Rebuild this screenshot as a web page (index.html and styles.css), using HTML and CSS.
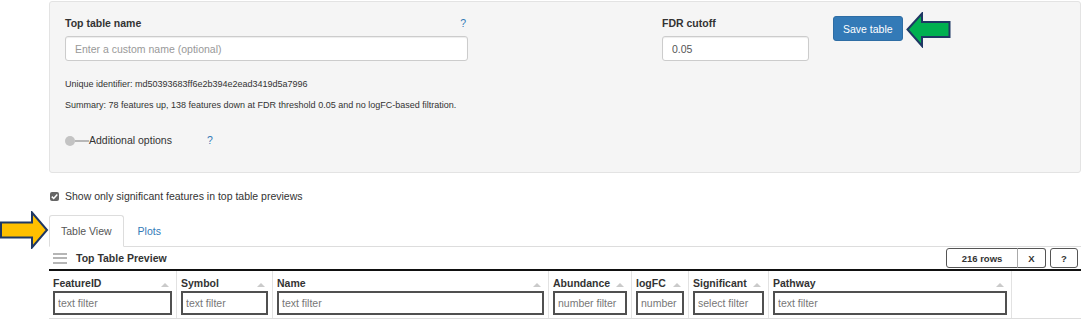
FILE: index.html
```html
<!DOCTYPE html>
<html lang="en">
<head>
    <meta charset="UTF-8">
    <meta name="viewport" content="width=device-width, initial-scale=1.0">
    <title>Top Table</title>
    <link rel="stylesheet" href="styles.css">
</head>
<body>
<div class="page">
    <div class="well">
        <div class="name-col">
            <div class="label-row">
                <label for="tableName">Top table name</label>
                <span class="help">?</span>
            </div>
            <input id="tableName" class="form-input" type="text" placeholder="Enter a custom name (optional)">
            <p class="note id-note">Unique identifier: md50393683ff6e2b394e2ead3419d5a7996</p>
            <p class="note summary">Summary: 78 features up, 138 features down at FDR threshold 0.05 and no logFC-based filtration.</p>
            <div class="switch-row">
                <span class="switch"></span>
                <span>Additional options</span>
                <span class="help">?</span>
            </div>
        </div>
        <div class="fdr-col">
            <label for="fdr">FDR cutoff</label>
            <input id="fdr" class="form-input value" type="text" value="0.05">
        </div>
        <div class="save-col">
            <button class="btn-save">Save table</button>
            <svg class="arrow-green" width="45" height="36" viewBox="0 0 45 36">
                <polygon points="1.5,17.5 16,1.5 16,10 43.5,10 43.5,25 16,25 16,34" fill="#00b050" stroke="#1f3864" stroke-width="2" stroke-linejoin="miter"/>
            </svg>
        </div>
    </div>

    <label class="check-row">
        <span class="check-box">
            <svg width="9" height="9" viewBox="0 0 9 9"><polyline points="1.8,4.6 3.7,6.5 7.3,2.4" fill="none" stroke="#fff" stroke-width="1.5"/></svg>
        </span>
        Show only significant features in top table previews
    </label>

    <div class="tabs">
        <svg class="arrow-yellow" width="49" height="38" viewBox="0 0 49 38">
            <polygon points="1,11.5 32,11.5 32,1.5 47,19 32,36.5 32,26.5 1,26.5" fill="#ffc000" stroke="#1f3864" stroke-width="2"/>
        </svg>
        <a class="tab active" href="#">Table View</a>
        <a class="tab" href="#">Plots</a>
    </div>

    <div class="toolbar">
        <span class="menu-icon"><i></i><i></i><i></i></span>
        <span class="toolbar-title">Top Table Preview</span>
        <div class="toolbar-btns">
            <div class="btn-group">
                <button class="tbtn rows-btn">216 rows</button>
                <button class="tbtn x-btn">X</button>
            </div>
            <button class="tbtn help-btn">?</button>
        </div>
    </div>

    <div class="grid-head">
        <div class="hcell">
            <div class="hlabel">FeatureID<span class="sort"></span></div>
            <input class="filter" type="text" placeholder="text filter">
        </div>
        <div class="hcell">
            <div class="hlabel">Symbol<span class="sort"></span></div>
            <input class="filter" type="text" placeholder="text filter">
        </div>
        <div class="hcell">
            <div class="hlabel">Name<span class="sort"></span></div>
            <input class="filter" type="text" placeholder="text filter">
        </div>
        <div class="hcell">
            <div class="hlabel">Abundance<span class="sort"></span></div>
            <input class="filter" type="text" placeholder="number filter">
        </div>
        <div class="hcell">
            <div class="hlabel">logFC<span class="sort"></span></div>
            <input class="filter" type="text" placeholder="number filter">
        </div>
        <div class="hcell">
            <div class="hlabel">Significant<span class="sort"></span></div>
            <input class="filter" type="text" placeholder="select filter">
        </div>
        <div class="hcell">
            <div class="hlabel">Pathway<span class="sort"></span></div>
            <input class="filter" type="text" placeholder="text filter">
        </div>
    </div>
</div>
</body>
</html>
```

FILE: styles.css
```css
body {
    margin: 0;
    font-family: "Liberation Sans", Arial, sans-serif;
    font-size: 10.5px;
    line-height: 15px;
    color: #333;
    background: #fff;
}
.page {
    padding: 0 5px 0 49px;
}
.well {
    display: flex;
    align-items: flex-start;
    margin-top: 1px;
    padding: 14px 15px 24px 15px;
    background: #f5f5f5;
    border: 1px solid #e3e3e3;
    border-radius: 3px;
}
.name-col {
    width: 403px;
}
.fdr-col {
    width: 147px;
    margin-left: 194px;
}
.save-col {
    display: flex;
    align-items: flex-start;
    margin-left: 24px;
}
label {
    display: block;
    font-weight: bold;
    margin-bottom: 5px;
}
.label-row {
    display: flex;
    justify-content: space-between;
    padding-right: 2px;
}
.help {
    color: #337ab7;
}
.form-input {
    display: block;
    box-sizing: border-box;
    width: 100%;
    height: 25px;
    padding: 0 9px;
    font-family: inherit;
    font-size: 10.5px;
    color: #555;
    background: #fff;
    border: 1px solid #ccc;
    border-radius: 3px;
    box-shadow: inset 0 1px 1px rgba(0, 0, 0, 0.075);
}
.form-input::placeholder {
    color: #999;
}
.note {
    margin: 0;
    font-size: 9px;
    line-height: 14px;
}
.id-note {
    margin-top: 16px;
}
.summary {
    margin-top: 7px;
}
.switch-row {
    display: flex;
    align-items: center;
    margin-top: 21px;
}
.switch-row .help {
    margin-left: 35px;
}
.switch {
    display: inline-flex;
    align-items: center;
}
.switch::before {
    content: "";
    width: 10px;
    height: 10px;
    border-radius: 50%;
    background: #c3c3c3;
}
.switch::after {
    content: "";
    width: 14px;
    height: 2px;
    background: #b8b8b8;
}
.btn-save {
    height: 25px;
    padding: 0 9px;
    font-family: inherit;
    font-size: 10.5px;
    color: #fff;
    background: #337ab7;
    border: 1px solid #2e6da4;
    border-radius: 3px;
}
.arrow-green {
    display: block;
    margin-left: 3px;
    margin-top: -4px;
}
.check-row {
    display: flex;
    align-items: center;
    margin: 16px 0 0 1px;
    font-weight: normal;
}
.check-box {
    display: flex;
    width: 9px;
    height: 9px;
    margin-right: 6px;
    background: #666;
    border-radius: 2px;
}
.tabs {
    position: relative;
    display: flex;
    margin-top: 11px;
    border-bottom: 1px solid #ddd;
}
.arrow-yellow {
    position: absolute;
    left: -49px;
    top: -4px;
}
.tab {
    padding: 8px 11px 7px;
    margin: 0 2px -1px 0;
    color: #337ab7;
    text-decoration: none;
    border: 1px solid transparent;
    border-radius: 3px 3px 0 0;
}
.tab.active {
    color: #555;
    background: #fff;
    border-color: #ddd #ddd transparent;
}
.toolbar {
    display: flex;
    align-items: center;
    height: 22px;
    padding-left: 4px;
}
.menu-icon {
    display: flex;
    flex-direction: column;
    gap: 2.5px;
    width: 14px;
}
.menu-icon i {
    height: 2px;
    background: #b5b5b5;
}
.toolbar-title {
    margin-left: 9px;
    font-weight: bold;
}
.toolbar-btns {
    display: flex;
    gap: 4px;
    margin-left: auto;
    margin-right: 3px;
}
.btn-group {
    display: flex;
}
.tbtn {
    height: 20px;
    padding: 0;
    font-family: inherit;
    font-size: 9.5px;
    font-weight: bold;
    color: #333;
    background: #fff;
    border: 1px solid #555;
    border-radius: 3px;
}
.rows-btn {
    width: 72px;
    border-radius: 3px 0 0 3px;
}
.x-btn {
    width: 29px;
    border-left-color: #aaa;
    border-radius: 0 3px 3px 0;
    margin-left: -1px;
}
.help-btn {
    width: 28px;
}
.grid-head {
    display: grid;
    grid-template-columns: 128px 96px 276px 83px 57px 80px 243px;
    border-top: 2px solid #111;
    border-bottom: 1px solid #ddd;
}
.hcell {
    box-sizing: border-box;
    padding: 5px 4px 3px 4px;
    border-right: 1px solid #e2e2e2;
}
.hlabel {
    display: flex;
    justify-content: space-between;
    align-items: center;
    padding-right: 3px;
    font-weight: bold;
}
.sort {
    width: 0;
    height: 0;
    margin-top: 2px;
    border-left: 4px solid transparent;
    border-right: 4px solid transparent;
    border-bottom: 4px solid #cacaca;
}
.filter {
    display: block;
    box-sizing: border-box;
    width: 100%;
    height: 24px;
    padding: 0 3px;
    font-family: inherit;
    font-size: 10.5px;
    color: #555;
    border: 2px solid #505050;
    border-radius: 0;
    outline: none;
}
.filter::placeholder {
    color: #777;
}
```
